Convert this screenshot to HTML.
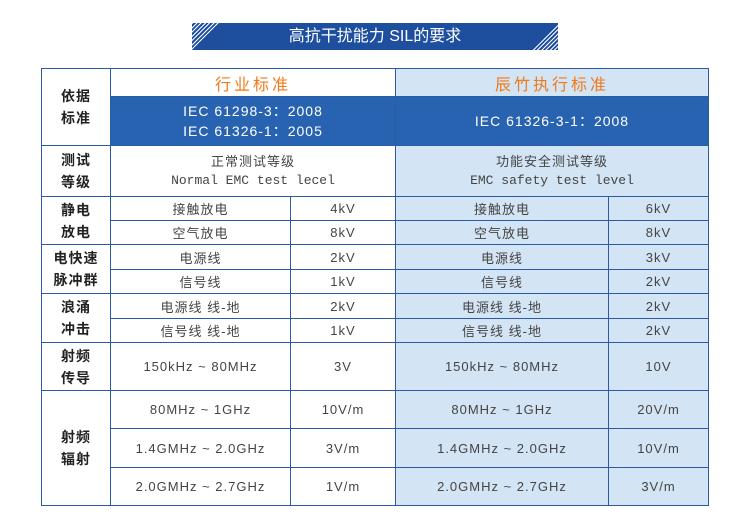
<!DOCTYPE html>
<html><head><meta charset="utf-8"><style>
body{margin:0;width:750px;height:526px;background:#fff;position:relative;font-family:"Liberation Sans","Noto Sans CJK SC",sans-serif;overflow:hidden}
.ban{position:absolute;left:192px;top:23px;width:366px;height:27px;background:#1d4f9e;color:#fff;font-size:16px;text-align:center;line-height:27px}
.ban:before,.ban:after{content:"";position:absolute;top:0;width:28px;height:27px;background:repeating-linear-gradient(135deg,#fff 0 1px,#1d4f9e 1px 3px)}
.ban:before{left:0;clip-path:polygon(0 0,100% 0,0 100%)}
.ban:after{right:0;clip-path:polygon(100% 0,100% 100%,0 100%)}
table{position:absolute;left:41px;top:68px;border-collapse:collapse;table-layout:fixed;font-size:13px;color:#444}
td{border:1.5px solid #2a5aa8;text-align:center;padding:0;letter-spacing:1px}
td.t{border-top:1px solid #8fb0dd}
.L{font-weight:bold;color:#222;line-height:22px;font-size:14px}
.R{background:#d3e4f4}
.h{color:#f07a1a;font-size:16px;letter-spacing:3px}
.b{background:#2763b0;color:#fff;font-size:14px;line-height:20px}
.m{font-family:"Liberation Mono","Noto Sans CJK SC",monospace;letter-spacing:0}
</style></head><body>
<div class="ban">高抗干扰能力 SIL的要求</div>
<table>
<colgroup><col style="width:69px"><col style="width:180px"><col style="width:105px"><col style="width:213px"><col style="width:100px"></colgroup>
<tr style="height:28px"><td rowspan="2" class="L">依据<br>标准</td><td colspan="2" class="h">行业标准</td><td colspan="2" class="h R">辰竹执行标准</td></tr>
<tr style="height:49px"><td colspan="2" class="b">IEC 61298-3：2008<br>IEC 61326-1：2005</td><td colspan="2" class="b">IEC 61326-3-1：2008</td></tr>
<tr style="height:51px"><td class="L">测试<br>等级</td><td colspan="2" style="line-height:18px">正常测试等级<br><span class="m">Normal EMC test lecel</span></td><td colspan="2" class="R" style="line-height:18px">功能安全测试等级<br><span class="m">EMC safety test level</span></td></tr>
<tr style="height:24px"><td rowspan="2" class="L">静电<br>放电</td><td>接触放电</td><td>4kV</td><td class="R">接触放电</td><td class="R">6kV</td></tr>
<tr style="height:24px"><td class="t">空气放电</td><td class="t">8kV</td><td class="R t">空气放电</td><td class="R t">8kV</td></tr>
<tr style="height:25px"><td rowspan="2" class="L">电快速<br>脉冲群</td><td>电源线</td><td>2kV</td><td class="R">电源线</td><td class="R">3kV</td></tr>
<tr style="height:24px"><td class="t">信号线</td><td class="t">1kV</td><td class="R t">信号线</td><td class="R t">2kV</td></tr>
<tr style="height:25px"><td rowspan="2" class="L">浪涌<br>冲击</td><td>电源线 线-地</td><td>2kV</td><td class="R">电源线 线-地</td><td class="R">2kV</td></tr>
<tr style="height:24px"><td class="t">信号线 线-地</td><td class="t">1kV</td><td class="R t">信号线 线-地</td><td class="R t">2kV</td></tr>
<tr style="height:48px"><td class="L">射频<br>传导</td><td>150kHz ~ 80MHz</td><td>3V</td><td class="R">150kHz ~ 80MHz</td><td class="R">10V</td></tr>
<tr style="height:38px"><td rowspan="3" class="L">射频<br>辐射</td><td>80MHz ~ 1GHz</td><td>10V/m</td><td class="R">80MHz ~ 1GHz</td><td class="R">20V/m</td></tr>
<tr style="height:39px"><td>1.4GMHz ~ 2.0GHz</td><td>3V/m</td><td class="R">1.4GMHz ~ 2.0GHz</td><td class="R">10V/m</td></tr>
<tr style="height:38px"><td>2.0GMHz ~ 2.7GHz</td><td>1V/m</td><td class="R">2.0GMHz ~ 2.7GHz</td><td class="R">3V/m</td></tr>
</table>
</body></html>
